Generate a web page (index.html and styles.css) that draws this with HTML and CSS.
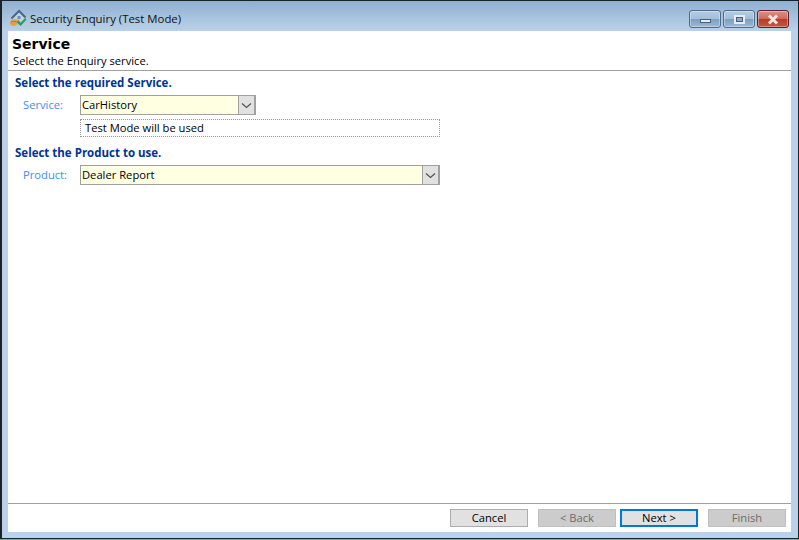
FILE: index.html
```html
<!DOCTYPE html>
<html lang="en">
<head>
<meta charset="utf-8">
<title>Security Enquiry (Test Mode)</title>
<link rel="stylesheet" href="styles.css">
</head>
<body>
<div class="window">
  <header class="titlebar">
    <svg class="app-icon" width="18" height="18" viewBox="0 0 18 18">
      <path d="M3 9 10 2l6 6v4H5z" fill="#c3d4e6"/>
      <path d="M2.500 9.500 10 2l6.500 6.500" fill="none" stroke="#4b6484" stroke-width="2"/>
      <path d="M8.500 7h3v3h-3z" fill="#6f8fb5"/>
      <path d="M1 13.500c.5-2 2.500-3.500 5-3.300l4.500.6-.4 1.800-2.600.4 1 2.500-3.500 1.500-3-.7C1.200 15.800.8 14.700 1 13.500z" fill="#dca04c"/>
      <path d="M2 13.200c1.500-1 3.500-1 5.500-.5" fill="none" stroke="#a8702a" stroke-width=".8"/>
      <path d="M7.500 13.200 9.500 11.500l2.200 2.300L16 9l1.500 1.500-5.800 6.500z" fill="#2c9d59"/>
    </svg>
    <span class="title">Security Enquiry (Test Mode)</span>
    <div class="controls">
      <div class="ctl"><span class="glyph-min"></span></div>
      <div class="ctl"><span class="glyph-max"></span></div>
      <div class="ctl ctl-close">
        <svg width="14" height="11" viewBox="0 0 14 11"><path d="M3 1.500 11 9.500M11 1.500 3 9.500" stroke="#f2e4e2" stroke-width="3" fill="none"/></svg>
      </div>
    </div>
  </header>
  <main class="client">
    <section class="head">
      <h1 class="head-title">Service</h1>
      <p class="head-sub">Select the Enquiry service.</p>
    </section>
    <section class="content">
      <h2 class="section">Select the required Service.</h2>
      <div class="row">
        <label class="label">Service:</label>
        <div class="combo combo-service"><span class="value">CarHistory</span>
          <span class="drop"><svg width="11" height="7" viewBox="0 0 11 7"><path d="M1 1.500 5.500 5.500 10 1.500" stroke="#555" stroke-width="1.300" fill="none"/></svg></span>
        </div>
      </div>
      <div class="note">Test Mode will be used</div>
      <h2 class="section section-product">Select the Product to use.</h2>
      <div class="row">
        <label class="label">Product:</label>
        <div class="combo combo-product"><span class="value">Dealer Report</span>
          <span class="drop"><svg width="11" height="7" viewBox="0 0 11 7"><path d="M1 1.500 5.500 5.500 10 1.500" stroke="#555" stroke-width="1.300" fill="none"/></svg></span>
        </div>
      </div>
    </section>
    <footer class="footer">
      <button class="btn btn-cancel">Cancel</button>
      <button class="btn btn-off">&lt; Back</button>
      <button class="btn btn-default">Next &gt;</button>
      <button class="btn btn-off btn-finish">Finish</button>
    </footer>
  </main>
</div>
</body>
</html>
```
FILE: styles.css
```css
* { box-sizing: border-box; }
html, body { margin: 0; padding: 0; }
body {
  width: 799px;
  height: 540px;
  overflow: hidden;
  background: #fff;
  font-family: "Open Sans", "Noto Sans", sans-serif;
  font-size: 11.2px;
  color: #000;
}
.window {
  width: 799px;
  height: 540px;
  display: flex;
  flex-direction: column;
  background: #b9d1ea;
  border: 2px solid #1c2228;
  border-top-width: 1px;
  border-bottom: 0;
  border-right-width: 1px;
  padding: 0 7px 8px 6px;
  position: relative;
}
.window::after {
  content: "";
  position: absolute;
  left: -2px;
  right: -1px;
  bottom: 0;
  height: 2px;
  background: linear-gradient(#1c2228 50%, #19d3e6 50%);
}
.titlebar {
  height: 30px;
  flex: none;
  margin: 0 -7px 0 -6px;
  padding: 5px 9px 0 7px;
  display: flex;
  align-items: center;
  background: linear-gradient(#8fb0d0, #a9c5e0 60%, #b9d1ea);
}
.app-icon { flex: none; margin-top: -1px; }
.title { margin-left: 3px; font-size: 11.4px; color: #111; }
.controls { margin-left: auto; display: flex; gap: 2px; margin-top: 1px; }
.ctl {
  width: 32px;
  height: 18px;
  border: 1px solid #4d6c8c;
  border-radius: 3px;
  display: flex;
  align-items: center;
  justify-content: center;
  background: linear-gradient(#b4cbe2, #a5bfd9 48%, #7f9fc0 52%, #9cb8d4);
  box-shadow: inset 0 0 0 1px rgba(255,255,255,.35);
}
.ctl-close {
  border-color: #5a2030;
  background: linear-gradient(#dc9184, #cf6b5b 48%, #b53d2a 52%, #c8563f);
}
.glyph-min {
  width: 11px;
  height: 4px;
  margin-top: 3px;
  background: #e8edf3;
  border: 1px solid #45607f;
}
.glyph-max {
  width: 11px;
  height: 9px;
  border: 2px solid #e8edf3;
  outline: 1px solid #45607f;
  outline-offset: -3px;
  background: #8fa9c6;
}
.client {
  flex: 1;
  display: flex;
  flex-direction: column;
  background: #fff;
  min-height: 0;
}
.head { height: 40px; flex: none; border-bottom: 1px solid #a0a0a0; padding: 4px 4px 0; }
.head-title { margin: 0; font-size: 14px; line-height: 18px; font-weight: 700; font-family: "DejaVu Sans", sans-serif; }
.head-sub { margin: 0 0 0 1px; line-height: 15px; }
.content { flex: 1; padding: 3px 0 0 7px; }
.section { margin: 0; font-size: 11.5px; line-height: 17px; font-weight: 700; color: #003399; }
.section-product { margin-top: 7px; }
.row { display: flex; align-items: center; margin-top: 4px; padding-left: 8px; }
.label { width: 57px; padding-bottom: 2px; color: #3f8ef0; flex: none; }
.combo {
  height: 20px;
  display: flex;
  align-items: center;
  justify-content: space-between;
  background: #ffffe1;
  border: 1px solid #a0a0a0;
  border-right-width: 2px;
}
.combo-service { width: 176px; }
.combo-product { width: 360px; }
.value { padding: 0 0 2px 1px; }
.drop {
  width: 16px;
  height: 18px;
  background: #e1e1e1;
  border-left: 1px solid #a0a0a0;
  display: flex;
  align-items: center;
  justify-content: center;
}
.note {
  width: 360px;
  height: 18px;
  margin: 4px 0 0 65px;
  padding-left: 4px;
  line-height: 16px;
  border: 1px dotted #999;
}
.footer {
  height: 29px;
  flex: none;
  border-top: 1px solid #a0a0a0;
  display: flex;
  justify-content: flex-end;
  align-items: flex-start;
  gap: 4px;
  padding: 5px 5px 0 0;
}
.btn {
  width: 78px;
  height: 18px;
  padding: 0;
  font: inherit;
  line-height: 14px;
  color: #000;
  background: #e1e1e1;
  border: 1px solid #adadad;
}
.btn-cancel { margin-right: 6px; }
.btn-finish { margin-left: 6px; }
.btn-off { background: #cccccc; color: #6d6d6d; border-color: #bfbfbf; }
.btn-default { border: 2px solid #0078d7; }
```
